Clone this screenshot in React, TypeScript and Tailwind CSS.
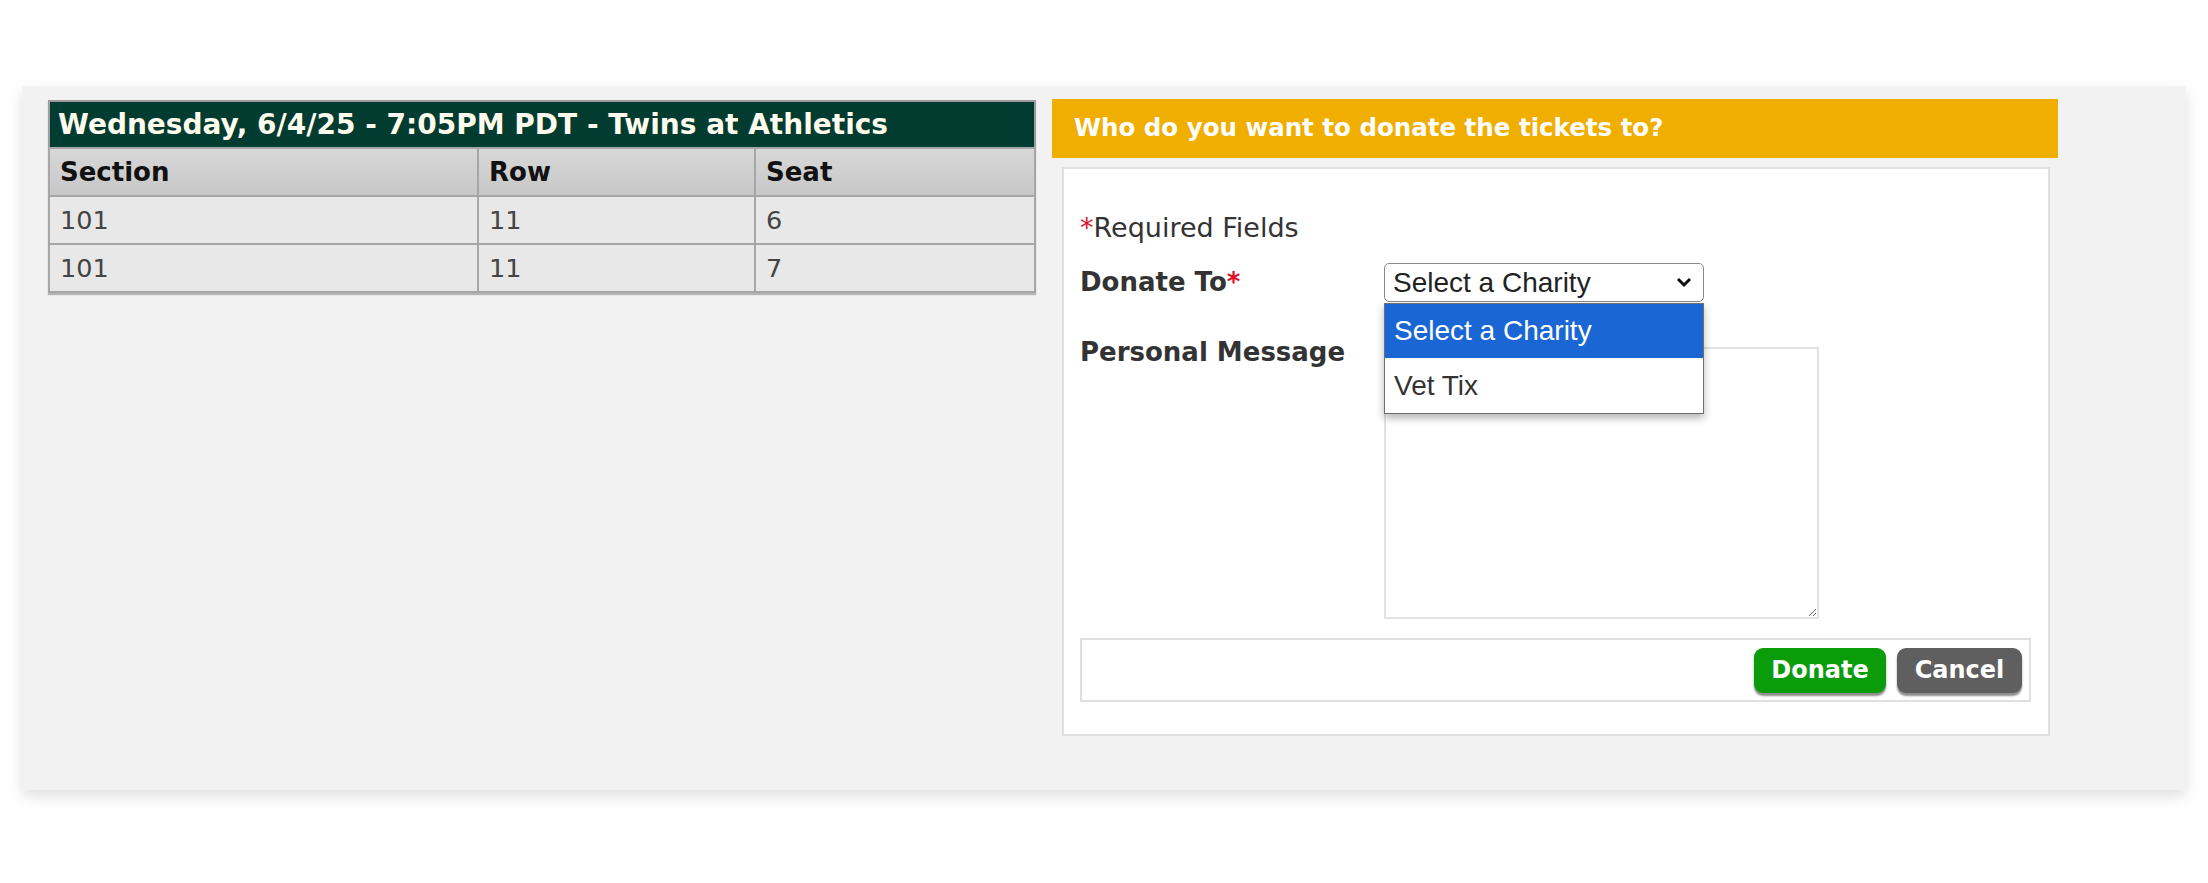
import React from "react";

export default function App() {
  return (
    <div className="w-full h-[883px] bg-white pt-[86px] px-[22px] font-['DejaVu_Sans',Verdana,sans-serif]">
      <div className="h-[704px] bg-[#f2f2f2] shadow-[0_6px_14px_rgba(0,0,0,0.13)] flex items-start pl-[26px] pt-[13px] gap-[16px]">
        {/* Left: ticket table */}
        <table className="w-[988px] mt-[1px] border-collapse border-2 border-[#9c9c9c] shadow-[0_2px_1px_rgba(0,0,0,0.25)]">
          <thead>
            <tr>
              <th
                colSpan={3}
                className="h-[47px] bg-[#023b2f] text-left pl-[8px] text-[28px] font-bold text-[#fffbee] leading-none"
              >
                Wednesday, 6/4/25 - 7:05PM PDT - Twins at Athletics
              </th>
            </tr>
            <tr className="bg-gradient-to-b from-[#d8d8d8] to-[#c7c7c7]">
              <th className="w-[429px] h-[48px] border-2 border-[#a6a6a6] text-left pl-[10px] text-[26px] font-bold text-[#111]">
                Section
              </th>
              <th className="w-[277px] h-[48px] border-2 border-[#a6a6a6] text-left pl-[10px] text-[26px] font-bold text-[#111]">
                Row
              </th>
              <th className="h-[48px] border-2 border-[#a6a6a6] text-left pl-[10px] text-[26px] font-bold text-[#111]">
                Seat
              </th>
            </tr>
          </thead>
          <tbody>
            {[
              ["101", "11", "6"],
              ["101", "11", "7"],
            ].map((r, i) => (
              <tr key={i} className="bg-[#e8e8e8]">
                {r.map((c, j) => (
                  <td
                    key={j}
                    className="h-[48px] border-2 border-[#a6a6a6] pl-[10px] text-[25.5px] text-[#444]"
                  >
                    {c}
                  </td>
                ))}
              </tr>
            ))}
          </tbody>
        </table>

        {/* Right: donate form */}
        <div className="w-[1006px] flex flex-col">
          <div className="h-[59px] bg-[#f0ae00] flex items-center pl-[22px] text-[24.5px] font-bold text-white">
            Who do you want to donate the tickets to?
          </div>
          <div className="ml-[10px] mr-[8px] mt-[9px] border-2 border-[#e0e0e0] bg-white pt-[42px] pl-[16px] pr-[17px] pb-[32px] flex flex-col">
            <div className="h-[34px] flex items-center text-[27px] text-[#333]">
              <span className="text-[#e0102a]">*</span>
              <span>Required Fields</span>
            </div>

            <div className="mt-[18px] flex items-center">
              <div className="w-[304px] text-[26px] font-bold text-[#333]">
                Donate To<span className="text-[#e0102a]">*</span>
              </div>
              <div className="relative w-[320px] h-[39px]">
                <div className="w-full h-full border border-[#8a8a8a] rounded-[5px] bg-white flex items-center justify-between pl-[8px] pr-[10px] font-['Liberation_Sans',Arial,sans-serif] text-[28px] text-[#222]">
                  <span>Select a Charity</span>
                  <svg width="18" height="13" viewBox="0 0 18 13">
                    <polyline
                      points="3,3 9,9 15,3"
                      fill="none"
                      stroke="#111"
                      strokeWidth="3"
                    />
                  </svg>
                </div>
                <div className="absolute left-0 top-[40px] w-[320px] z-10 border border-[#6e6e6e] bg-white shadow-[0_4px_8px_rgba(0,0,0,0.3)] font-['Liberation_Sans',Arial,sans-serif] text-[28px]">
                  <div className="h-[54px] bg-[#1a66d4] text-white flex items-center pl-[9px]">
                    Select a Charity
                  </div>
                  <div className="h-[55px] text-[#333] flex items-center pl-[9px]">
                    Vet Tix
                  </div>
                </div>
              </div>
            </div>

            <div className="mt-[33px] flex items-start">
              <div className="w-[304px] h-[34px] flex items-center text-[26px] font-bold text-[#333]">
                Personal Message
              </div>
              <textarea className="mt-[12px] w-[435px] h-[272px] border-2 border-[#e2e2e2] bg-white outline-none" />
            </div>

            <div className="mt-[19px] h-[64px] border-2 border-[#e0e0e0] flex items-center justify-end pr-[7px] gap-[11px]">
              <button className="w-[132px] h-[45px] rounded-[9px] bg-[#0a9c0a] text-white text-[24px] font-bold shadow-[0_3px_2px_rgba(0,0,0,0.45)]">
                Donate
              </button>
              <button className="w-[125px] h-[45px] rounded-[9px] bg-[#5f5f5f] text-white text-[24px] font-bold shadow-[0_3px_2px_rgba(0,0,0,0.45)]">
                Cancel
              </button>
            </div>
          </div>
        </div>
      </div>
    </div>
  );
}
